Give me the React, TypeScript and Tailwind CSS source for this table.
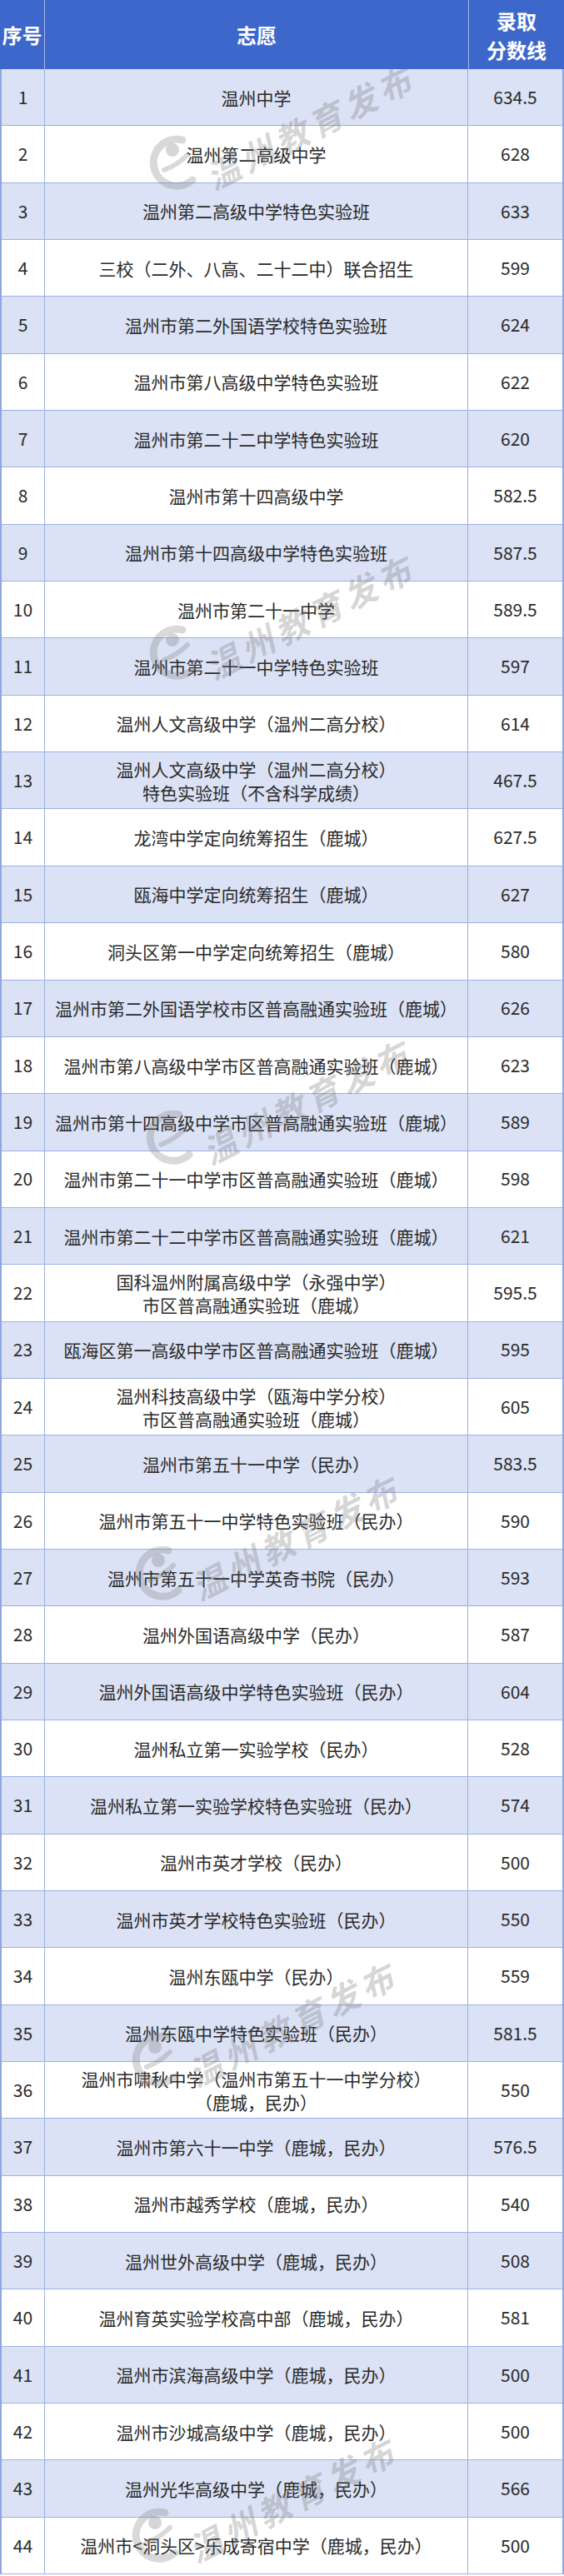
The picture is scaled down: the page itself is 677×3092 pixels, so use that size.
import React from 'react';

// 志愿 lines, 录取分数线
const rows: [string[], string][] = [
  [['温州中学'], '634.5'],
  [['温州第二高级中学'], '628'],
  [['温州第二高级中学特色实验班'], '633'],
  [['三校（二外、八高、二十二中）联合招生'], '599'],
  [['温州市第二外国语学校特色实验班'], '624'],
  [['温州市第八高级中学特色实验班'], '622'],
  [['温州市第二十二中学特色实验班'], '620'],
  [['温州市第十四高级中学'], '582.5'],
  [['温州市第十四高级中学特色实验班'], '587.5'],
  [['温州市第二十一中学'], '589.5'],
  [['温州市第二十一中学特色实验班'], '597'],
  [['温州人文高级中学（温州二高分校）'], '614'],
  [['温州人文高级中学（温州二高分校）', '特色实验班（不含科学成绩）'], '467.5'],
  [['龙湾中学定向统筹招生（鹿城）'], '627.5'],
  [['瓯海中学定向统筹招生（鹿城）'], '627'],
  [['洞头区第一中学定向统筹招生（鹿城）'], '580'],
  [['温州市第二外国语学校市区普高融通实验班（鹿城）'], '626'],
  [['温州市第八高级中学市区普高融通实验班（鹿城）'], '623'],
  [['温州市第十四高级中学市区普高融通实验班（鹿城）'], '589'],
  [['温州市第二十一中学市区普高融通实验班（鹿城）'], '598'],
  [['温州市第二十二中学市区普高融通实验班（鹿城）'], '621'],
  [['国科温州附属高级中学（永强中学）', '市区普高融通实验班（鹿城）'], '595.5'],
  [['瓯海区第一高级中学市区普高融通实验班（鹿城）'], '595'],
  [['温州科技高级中学（瓯海中学分校）', '市区普高融通实验班（鹿城）'], '605'],
  [['温州市第五十一中学（民办）'], '583.5'],
  [['温州市第五十一中学特色实验班（民办）'], '590'],
  [['温州市第五十一中学英奇书院（民办）'], '593'],
  [['温州外国语高级中学（民办）'], '587'],
  [['温州外国语高级中学特色实验班（民办）'], '604'],
  [['温州私立第一实验学校（民办）'], '528'],
  [['温州私立第一实验学校特色实验班（民办）'], '574'],
  [['温州市英才学校（民办）'], '500'],
  [['温州市英才学校特色实验班（民办）'], '550'],
  [['温州东瓯中学（民办）'], '559'],
  [['温州东瓯中学特色实验班（民办）'], '581.5'],
  [['温州市啸秋中学（温州市第五十一中学分校）', '（鹿城，民办）'], '550'],
  [['温州市第六十一中学（鹿城，民办）'], '576.5'],
  [['温州市越秀学校（鹿城，民办）'], '540'],
  [['温州世外高级中学（鹿城，民办）'], '508'],
  [['温州育英实验学校高中部（鹿城，民办）'], '581'],
  [['温州市滨海高级中学（鹿城，民办）'], '500'],
  [['温州市沙城高级中学（鹿城，民办）'], '500'],
  [['温州光华高级中学（鹿城，民办）'], '566'],
  [['温州市<洞头区>乐成寄宿中学（鹿城，民办）'], '500'],
];

// watermark "dot" positions
const marks = [
  { x: 207, y: 180 },
  { x: 207, y: 768 },
  { x: 203, y: 1350 },
  { x: 190, y: 1873 },
  { x: 186, y: 2457 },
  { x: 186, y: 3028 },
];

function Watermark({ x, y }: { x: number; y: number }) {
  return (
    <>
      <svg
        className="absolute pointer-events-none"
        style={{ left: x - 32, top: y - 22 }}
        width="66"
        height="72"
        viewBox="0 0 66 72"
      >
        <g fill="none" stroke="rgba(120,120,120,0.28)" strokeLinecap="round">
          <path d="M44 10 A28 28 0 1 0 56 58" strokeWidth="9" />
          <path d="M22 46 Q38 40 50 28" strokeWidth="6" />
        </g>
        <circle cx="32" cy="22" r="8" fill="rgba(120,120,120,0.3)" />
      </svg>
      <div
        className="absolute pointer-events-none whitespace-nowrap origin-left -rotate-[27deg] text-[40px] leading-none font-bold italic tracking-[6px] text-[rgba(110,110,110,0.28)]"
        style={{ left: x + 42, top: y + 14 }}
      >
        温州教育发布
      </div>
    </>
  );
}

export default function App() {
  return (
    <div className="relative w-[677px] overflow-hidden bg-white font-['Noto_Sans_CJK_SC','Noto_Sans',sans-serif] text-[#2a2a2a]">
      {/* 表头 */}
      <div className="flex h-[83px] bg-[#3d67cb] text-white font-bold text-[24px]">
        <div className="w-[54px] flex items-center justify-center border-r border-[#a7bbe8]">序号</div>
        <div className="flex-1 flex items-center justify-center border-r border-[#a7bbe8]">志愿</div>
        <div className="w-[114px] flex flex-col items-center justify-center leading-[35px]">
          <span>录取</span>
          <span>分数线</span>
        </div>
      </div>

      {/* 표 본문 */}
      <div className="border-x-2 border-[#8ea7e0]">
        {rows.map(([lines, score], i) => (
          <div
            key={i}
            className={`flex h-[68.35px] border-b border-[#9bb0e4] text-[21px] ${
              i % 2 === 0 ? 'bg-[#dbe2f5]' : 'bg-white'
            }`}
          >
            <div className="w-[52px] flex items-center justify-center border-r border-[#9bb0e4]">
              {i + 1}
            </div>
            <div className="flex-1 flex flex-col items-center justify-center border-r border-[#9bb0e4] leading-[28px] whitespace-nowrap">
              {lines.map((l, j) => (
                <span key={j}>{l}</span>
              ))}
            </div>
            <div className="w-[113px] flex items-center justify-center">{score}</div>
          </div>
        ))}
      </div>

      {marks.map((m, i) => (
        <Watermark key={i} x={m.x} y={m.y} />
      ))}
    </div>
  );
}
